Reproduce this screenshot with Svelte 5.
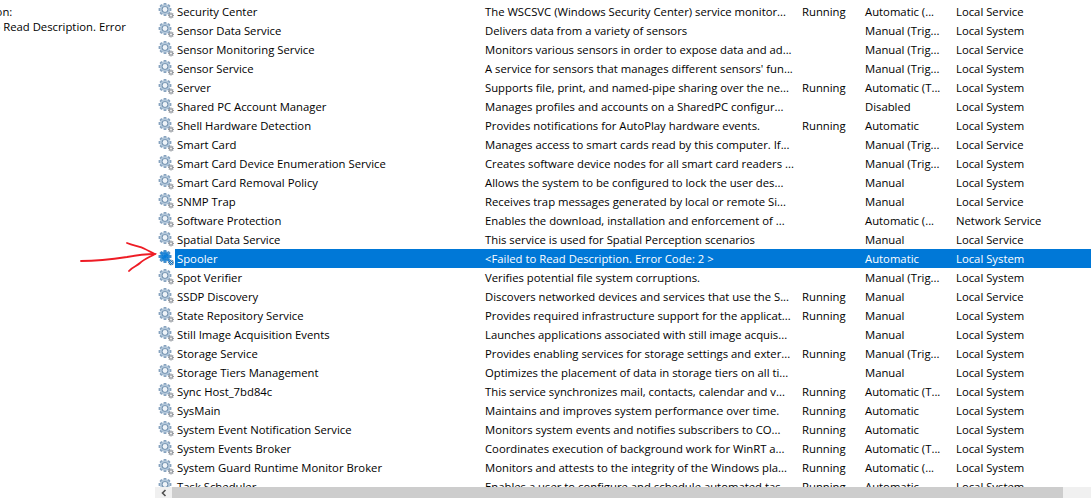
<script>
  const services = [
    ["Security Center", "The WSCSVC (Windows Security Center) service monitor...", "Running", "Automatic (...", "Local Service"],
    ["Sensor Data Service", "Delivers data from a variety of sensors", "", "Manual (Trig...", "Local System"],
    ["Sensor Monitoring Service", "Monitors various sensors in order to expose data and ad...", "", "Manual (Trig...", "Local Service"],
    ["Sensor Service", "A service for sensors that manages different sensors' fun...", "", "Manual (Trig...", "Local System"],
    ["Server", "Supports file, print, and named-pipe sharing over the ne...", "Running", "Automatic (T...", "Local System"],
    ["Shared PC Account Manager", "Manages profiles and accounts on a SharedPC configur...", "", "Disabled", "Local System"],
    ["Shell Hardware Detection", "Provides notifications for AutoPlay hardware events.", "Running", "Automatic", "Local System"],
    ["Smart Card", "Manages access to smart cards read by this computer. If...", "", "Manual (Trig...", "Local Service"],
    ["Smart Card Device Enumeration Service", "Creates software device nodes for all smart card readers ...", "", "Manual (Trig...", "Local System"],
    ["Smart Card Removal Policy", "Allows the system to be configured to lock the user des...", "", "Manual", "Local System"],
    ["SNMP Trap", "Receives trap messages generated by local or remote Si...", "", "Manual", "Local Service"],
    ["Software Protection", "Enables the download, installation and enforcement of ...", "", "Automatic (...", "Network Service"],
    ["Spatial Data Service", "This service is used for Spatial Perception scenarios", "", "Manual", "Local Service"],
    ["Spooler", "<Failed to Read Description. Error Code: 2 >", "", "Automatic", "Local System"],
    ["Spot Verifier", "Verifies potential file system corruptions.", "", "Manual (Trig...", "Local System"],
    ["SSDP Discovery", "Discovers networked devices and services that use the S...", "Running", "Manual", "Local Service"],
    ["State Repository Service", "Provides required infrastructure support for the applicat...", "Running", "Manual", "Local System"],
    ["Still Image Acquisition Events", "Launches applications associated with still image acquis...", "", "Manual", "Local System"],
    ["Storage Service", "Provides enabling services for storage settings and exter...", "Running", "Manual (Trig...", "Local System"],
    ["Storage Tiers Management", "Optimizes the placement of data in storage tiers on all ti...", "", "Manual", "Local System"],
    ["Sync Host_7bd84c", "This service synchronizes mail, contacts, calendar and v...", "Running", "Automatic (T...", "Local System"],
    ["SysMain", "Maintains and improves system performance over time.", "Running", "Automatic", "Local System"],
    ["System Event Notification Service", "Monitors system events and notifies subscribers to CO...", "Running", "Automatic", "Local System"],
    ["System Events Broker", "Coordinates execution of background work for WinRT a...", "Running", "Automatic (T...", "Local System"],
    ["System Guard Runtime Monitor Broker", "Monitors and attests to the integrity of the Windows pla...", "Running", "Automatic (...", "Local System"],
    ["Task Scheduler", "Enables a user to configure and schedule automated tas...", "Running", "Automatic", "Local System"]
  ];
  const selected = "Spooler";
  const teeth = [0, 45, 90, 135];
</script>

<div class="window">
  <aside class="side">
    <div class="side-text">
      <div>Description:</div>
      <div>&lt;Failed to Read Description. Error</div>
    </div>
  </aside>

  <div class="list">
    <div class="rows">
      {#each services as s}
        <div class="row" class:selected={s[0] === selected}>
          <svg class="gear" viewBox="0 0 17 17" width="17" height="17">
            <g transform="translate(7 6.5)">
              {#each teeth as a}
                <rect x="-1.5" y="-6.4" width="3" height="12.8" rx="0.6" fill="#87a3bf" transform="rotate({a})" />
              {/each}
              <circle r="5" fill="#b3c8db" />
              <circle r="3.3" fill="#6f8eac" />
              <circle r="2.4" fill="#eef3f8" />
            </g>
            <g transform="translate(13 12.5)">
              {#each teeth as a}
                <rect x="-0.6" y="-3" width="1.2" height="6" fill="#9a9ea4" transform="rotate({a})" />
              {/each}
              <circle r="2.1" fill="#9a9ea4" />
              <circle r="0.9" fill="#fff" />
            </g>
            {#if s[0] === selected}
              <g transform="translate(7 6.5)" fill="url(#dots)">
                {#each teeth as a}
                  <rect x="-1.5" y="-6.4" width="3" height="12.8" transform="rotate({a})" />
                {/each}
                <circle r="5" />
              </g>
              <circle cx="13" cy="12.5" r="2.6" fill="url(#dots)" />
            {/if}
          </svg>
          <div class="cell name">{s[0]}</div>
          <div class="cell desc">{s[1]}</div>
          <div class="cell status">{s[2]}</div>
          <div class="cell startup">{s[3]}</div>
          <div class="cell logon">{s[4]}</div>
        </div>
      {/each}
    </div>

    <div class="hscroll">
      <div class="arrow">
        <svg viewBox="0 0 8 8" width="8" height="8">
          <path d="M5.5 1 L2.5 4 L5.5 7" fill="none" stroke="#505050" stroke-width="1.6" />
        </svg>
      </div>
      <div class="thumb"></div>
      <div class="track"></div>
    </div>
  </div>

  <svg class="defs" width="0" height="0">
    <defs>
      <pattern id="dots" width="2" height="2" patternUnits="userSpaceOnUse">
        <rect width="1" height="1" fill="#0078d7" />
        <rect x="1" y="1" width="1" height="1" fill="#0078d7" />
      </pattern>
    </defs>
  </svg>

  <svg class="scribble" viewBox="0 0 80 36" width="80" height="36">
    <path d="M1 21 C 16 21, 34 19, 47 17 C 57 15, 66 14, 75 14" fill="none" stroke="#ee1c25" stroke-width="1.8" stroke-linecap="round" />
    <path d="M47 3 C 54 6, 60 6, 65 9 C 69 11, 72 13, 75 14 C 70 17, 64 19, 60 23 C 57 26, 52 27, 49 31" fill="none" stroke="#ee1c25" stroke-width="1.8" stroke-linecap="round" />
  </svg>
</div>

<style>
  :global(body) {
    margin: 0;
    background: #fff;
  }

  .window {
    position: relative;
    display: flex;
    width: 1091px;
    height: 498px;
    overflow: hidden;
    background: #fff;
    color: #000;
    font-family: "Open Sans", "Noto Sans", sans-serif;
    font-size: 11.3px;
  }

  .side {
    width: 155px;
    flex: none;
    overflow: hidden;
  }

  .side-text {
    margin-left: -51px;
    padding-top: 4px;
    white-space: nowrap;
  }

  .side-text div {
    height: 15px;
    line-height: 16px;
  }

  .list {
    flex: 1;
    display: flex;
    flex-direction: column;
    min-width: 0;
  }

  .rows {
    flex: 1;
    overflow: hidden;
    padding-top: 2px;
    min-height: 0;
  }

  .row {
    display: grid;
    grid-template-columns: 20px 308px 317px 63px 91px 1fr;
    height: 19px;
    line-height: 19px;
    white-space: nowrap;
  }

  .gear {
    margin: 0 0 0 3px;
    align-self: center;
  }

  .cell {
    padding-left: 2px;
    overflow: hidden;
  }

  .selected .cell {
    background: #0078d7;
    color: #fff;
  }

  .hscroll {
    display: flex;
    height: 11px;
    flex: none;
    background: #f0f0f0;
  }

  .arrow {
    width: 17px;
    display: flex;
    align-items: center;
    justify-content: center;
  }

  .thumb {
    width: 891px;
    background: #cdcdcd;
  }

  .track {
    flex: 1;
  }

  .defs {
    position: absolute;
  }

  .scribble {
    position: absolute;
    left: 80px;
    top: 240px;
  }
</style>
